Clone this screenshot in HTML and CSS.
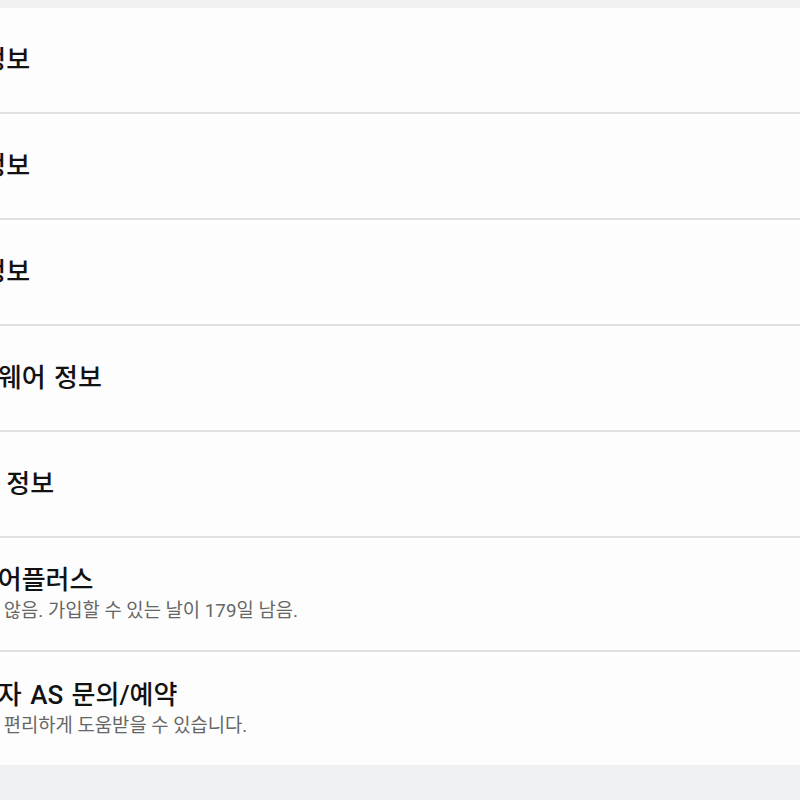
FILE: index.html
```html
<!DOCTYPE html>
<html lang="ko">
<head>
<meta charset="utf-8">
<title>휴대전화 정보</title>
<link rel="stylesheet" href="styles.css">
</head>
<body>
<div class="page">
  <ul class="list">
    <li class="item"><div class="text"><div class="title">상태 정보</div></div></li>
    <li class="item"><div class="text"><div class="title">법률 정보</div></div></li>
    <li class="item"><div class="text"><div class="title">규제 정보</div></div></li>
    <li class="item"><div class="text"><div class="title">소프트웨어 정보</div></div></li>
    <li class="item"><div class="text"><div class="title">배터리 정보</div></div></li>
    <li class="item item-two"><div class="text"><div class="title">삼성케어플러스</div><div class="sub">가입하지 않음. 가입할 수 있는 날이 179일 남음.</div></div></li>
    <li class="item item-two last"><div class="text"><div class="title">삼성전자 AS 문의/예약</div><div class="sub">채팅으로 편리하게 도움받을 수 있습니다.</div></div></li>
  </ul>
</div>
</body>
</html>
```
FILE: styles.css
```css
html, body {
  margin: 0;
  padding: 0;
  overflow: hidden;
  background: #f0f1f3;
}
body {
  font-family: Roboto, "Noto Sans CJK KR", sans-serif;
  color: #111;
}
.page {
  padding-top: 8px;
  background: linear-gradient(#f1f1f1 0 8px, transparent 8px);
}
.list {
  list-style: none;
  margin: 0;
  padding: 0;
  background: #fdfdfd;
}
.item {
  height: 104px;
  border-bottom: 2px solid #e1e2e4;
  display: flex;
  align-items: center;
}
.item-two {
  height: 112px;
}
.item.last {
  height: 113px;
  border-bottom: none;
}
.text {
  margin-left: -74px;
  white-space: nowrap;
}
.title {
  font-size: 26px;
  line-height: 32px;
  font-weight: 500;
  word-spacing: 2px;
  color: #121212;
}
.sub {
  margin-top: 2px;
  margin-left: 4px;
  font-size: 18.8px;
  line-height: 26px;
  color: #666666;
}
```
